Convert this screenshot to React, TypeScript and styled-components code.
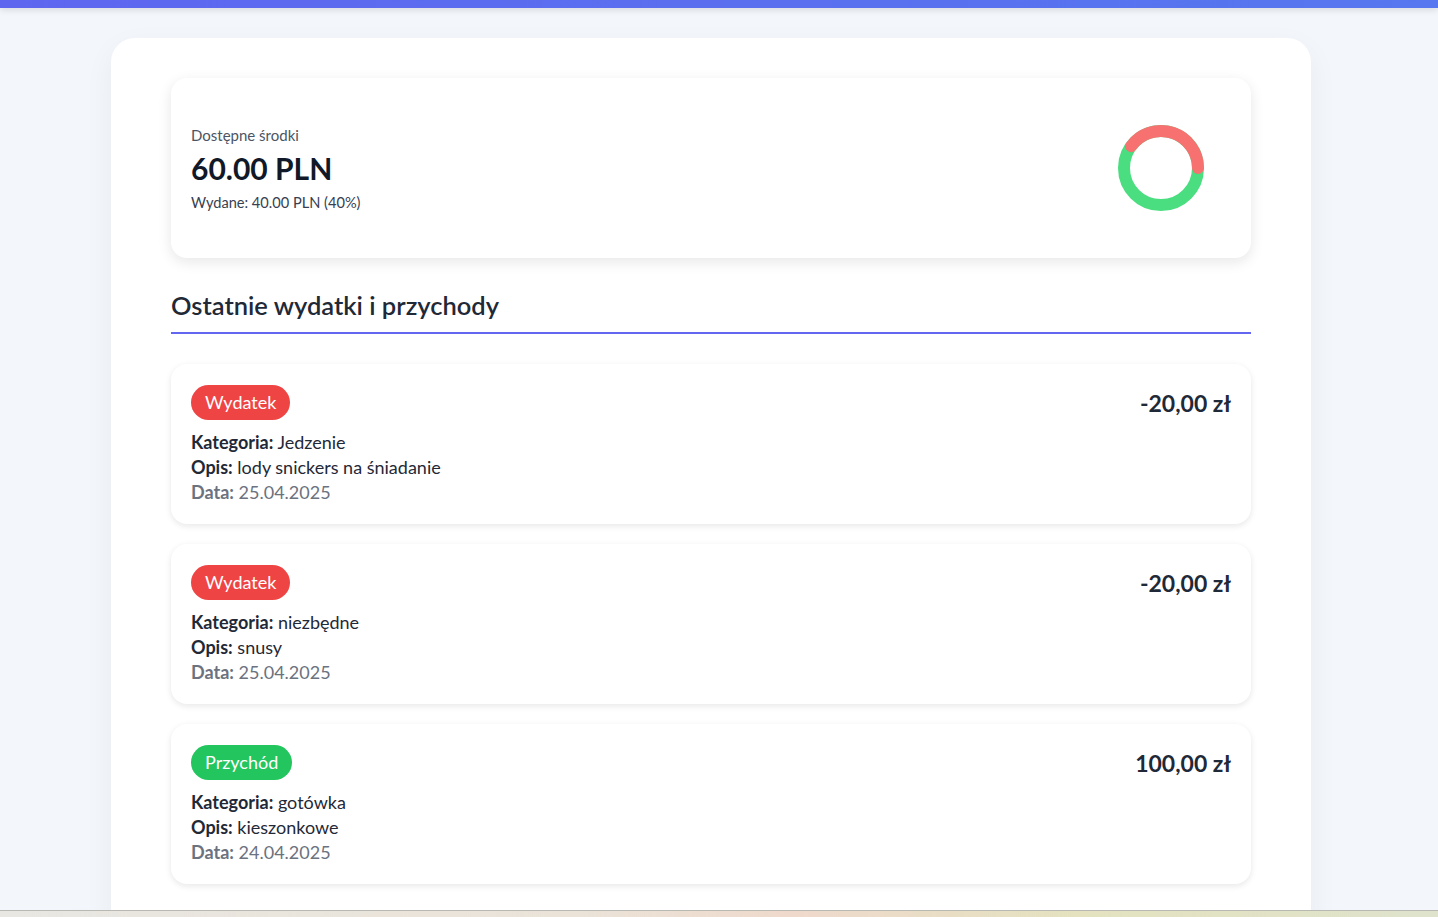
import styled, { createGlobalStyle } from "styled-components";

const GlobalStyle = createGlobalStyle`
  html, body {
    margin: 0;
    padding: 0;
    height: 100%;
  }
  body {
    background: #f3f6fa;
    font-family: Lato, "Noto Sans", sans-serif;
    color: #1f2937;
    overflow: hidden;
  }
`;

interface Transaction {
  type: "expense" | "income";
  category: string;
  description: string;
  date: string;
  amount: string;
}

const transactions: Transaction[] = [
  { type: "expense", category: "Jedzenie", description: "lody snickers na śniadanie", date: "25.04.2025", amount: "-20,00 zł" },
  { type: "expense", category: "niezbędne", description: "snusy", date: "25.04.2025", amount: "-20,00 zł" },
  { type: "income", category: "gotówka", description: "kieszonkowe", date: "24.04.2025", amount: "100,00 zł" },
];

const spentPercent = 40;

const polar = (cx: number, cy: number, r: number, deg: number) => {
  const rad = ((deg - 90) * Math.PI) / 180;
  return [cx + r * Math.cos(rad), cy + r * Math.sin(rad)];
};

const Donut = ({ percent }: { percent: number }) => {
  const end = 90;
  const start = end - (percent / 100) * 360;
  const [x1, y1] = polar(50, 50, 37, start);
  const [x2, y2] = polar(50, 50, 37, end);
  const large = percent > 50 ? 1 : 0;
  return (
    <svg width="100" height="100" viewBox="0 0 100 100">
      <circle cx="50" cy="50" r="37" fill="none" stroke="#4ade80" strokeWidth="12" />
      <path
        d={`M ${x1} ${y1} A 37 37 0 ${large} 1 ${x2} ${y2}`}
        fill="none"
        stroke="#f87171"
        strokeWidth="12"
        strokeLinecap="round"
      />
    </svg>
  );
};

export default function App() {
  return (
    <Page>
      <GlobalStyle />
      <TopBar />
      <Main>
        <Container>
          <SummaryCard>
            <div>
              <SummaryLabel>Dostępne środki</SummaryLabel>
              <Balance>60.00 PLN</Balance>
              <Spent>Wydane: 40.00 PLN ({spentPercent}%)</Spent>
            </div>
            <ChartBox>
              <Donut percent={spentPercent} />
            </ChartBox>
          </SummaryCard>

          <SectionTitle>Ostatnie wydatki i przychody</SectionTitle>

          <List>
            {transactions.map((t, i) => (
              <Card key={i}>
                <div>
                  <Badge income={t.type === "income"}>
                    {t.type === "income" ? "Przychód" : "Wydatek"}
                  </Badge>
                  <Details>
                    <Line>
                      <b>Kategoria:</b> {t.category}
                    </Line>
                    <Line>
                      <b>Opis:</b> {t.description}
                    </Line>
                    <Line muted>
                      <b>Data:</b> {t.date}
                    </Line>
                  </Details>
                </div>
                <Amount>{t.amount}</Amount>
              </Card>
            ))}
          </List>
        </Container>
      </Main>
      <Taskbar />
    </Page>
  );
}

const Page = styled.div`
  display: flex;
  flex-direction: column;
  height: 100vh;
`;

const TopBar = styled.div`
  height: 8px;
  flex-shrink: 0;
  background: linear-gradient(90deg, #5e66f0, #5677ef);
  box-shadow: 0 2px 6px rgba(15, 23, 42, 0.12);
  position: relative;
  z-index: 1;
`;

const Main = styled.main`
  flex: 1;
  overflow: hidden;
  padding: 30px 16px 0 0;
`;

const Container = styled.div`
  width: 1200px;
  box-sizing: border-box;
  margin: 0 auto;
  background: #fff;
  border-radius: 24px;
  padding: 40px 60px 60px;
  box-shadow: 0 10px 30px rgba(15, 23, 42, 0.05);
`;

const SummaryCard = styled.section`
  display: flex;
  align-items: center;
  justify-content: space-between;
  height: 180px;
  box-sizing: border-box;
  padding: 0 20px;
  border-radius: 16px;
  background: #fff;
  box-shadow: 0 4px 14px rgba(15, 23, 42, 0.1);
`;

const SummaryLabel = styled.div`
  font-size: 15px;
  color: #4b5563;
  margin-bottom: 6px;
`;

const Balance = styled.div`
  font-size: 30px;
  font-weight: 700;
  color: #111827;
  margin-bottom: 8px;
`;

const Spent = styled.div`
  font-size: 14.6px;
  color: #374151;
`;

const ChartBox = styled.div`
  display: flex;
  margin-right: 20px;
`;

const SectionTitle = styled.h2`
  margin: 32px 0 30px;
  padding-bottom: 12px;
  font-size: 25.5px;
  font-weight: 600;
  color: #1f2937;
  border-bottom: 2px solid #6366f1;
`;

const List = styled.div`
  display: flex;
  flex-direction: column;
  gap: 20px;
`;

const Card = styled.article`
  display: flex;
  justify-content: space-between;
  align-items: flex-start;
  padding: 21px 20px 19px;
  border-radius: 16px;
  background: #fff;
  box-shadow: 0 2px 6px rgba(15, 23, 42, 0.1);
`;

const Badge = styled.span<{ income?: boolean }>`
  display: inline-block;
  padding: 6px 14px;
  border-radius: 999px;
  font-size: 18px;
  line-height: 23px;
  color: #fff;
  background: ${(p) => (p.income ? "#22c55e" : "#ef4444")};
`;

const Details = styled.div`
  margin-top: 10px;
`;

const Line = styled.div<{ muted?: boolean }>`
  font-size: 18px;
  line-height: 25px;
  color: ${(p) => (p.muted ? "#6b7280" : "#1f2937")};

  b {
    font-weight: 700;
  }
`;

const Amount = styled.div`
  font-size: 23px;
  font-weight: 700;
  color: #1f2937;
  margin-top: 4px;
`;

const Taskbar = styled.div`
  height: 6px;
  flex-shrink: 0;
  border-top: 1px solid #b9b9b4;
  background: linear-gradient(90deg, #e8e7e2, #ebe3d8 40%, #efd9cc 55%, #e4e2bf 75%, #dfe3cc);
`;
